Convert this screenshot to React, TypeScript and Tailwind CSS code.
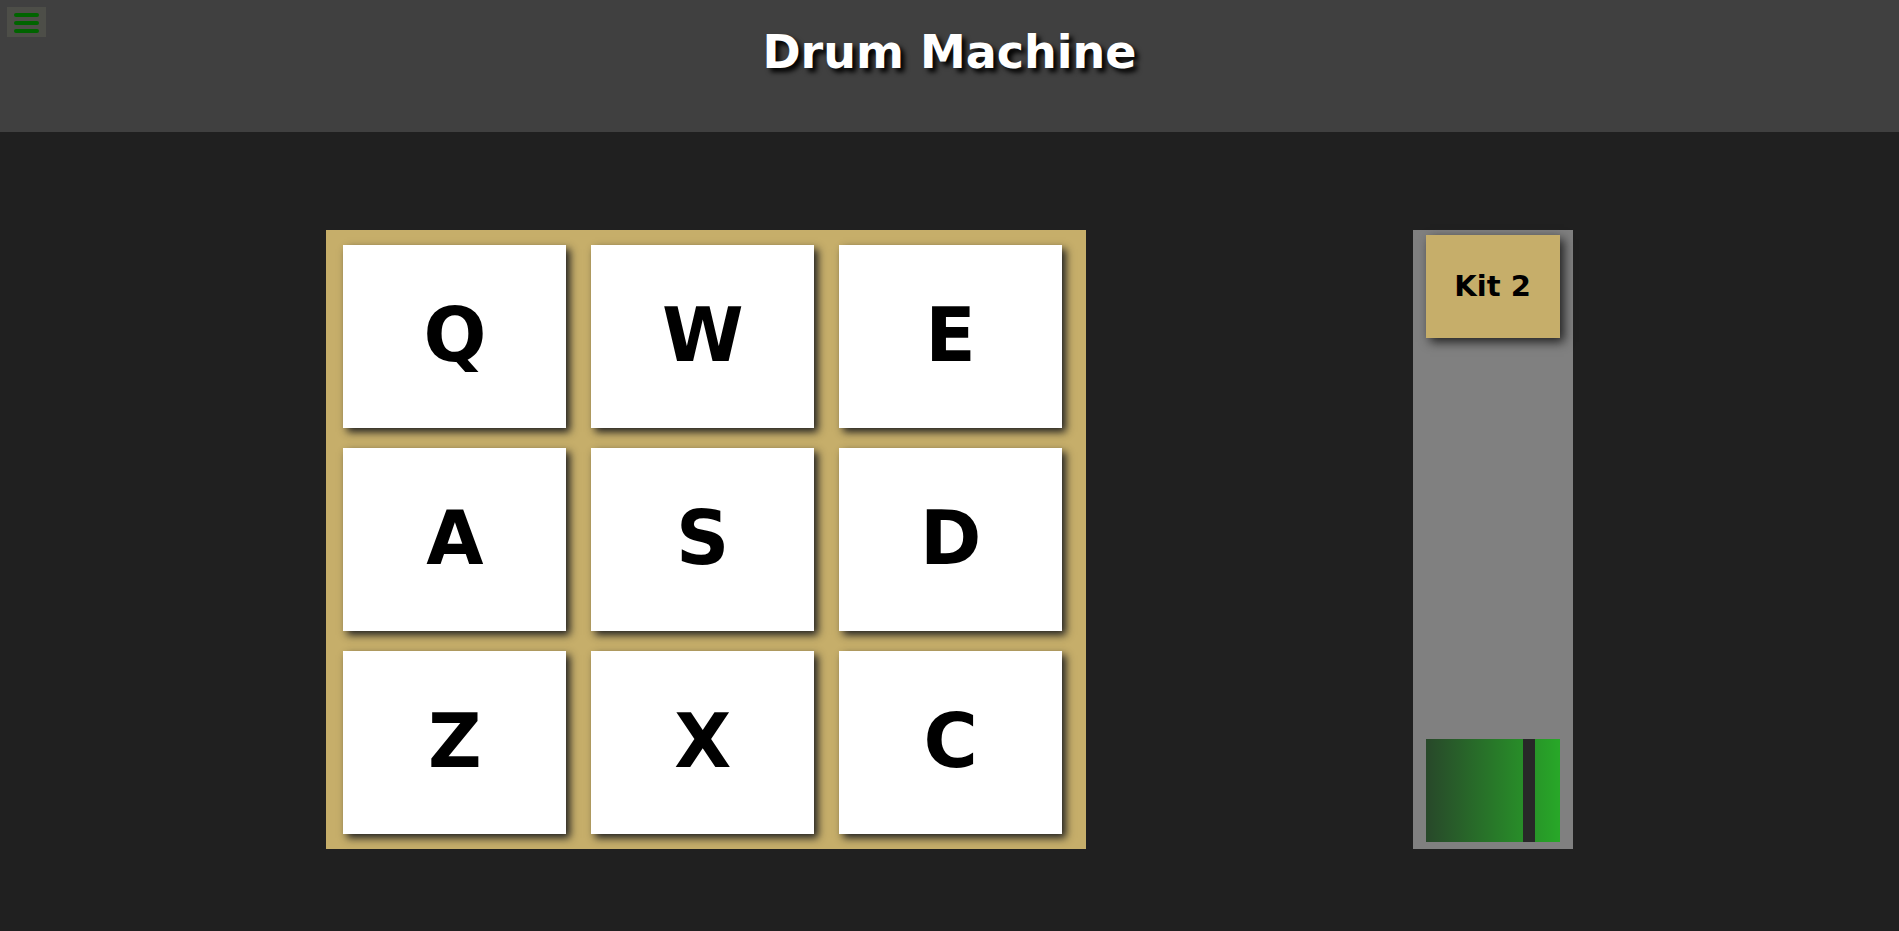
import { useState } from "react";

const pads = ["Q", "W", "E", "A", "S", "D", "Z", "X", "C"];

function MenuButton() {
  return (
    <button
      type="button"
      aria-label="Menu"
      className="absolute left-[7px] top-[7px] flex h-[30px] w-[39px] flex-col items-center justify-center gap-1 bg-[#4d4e48] pt-0.5"
    >
      <span className="h-1 w-[25px] rounded-sm bg-[#006400]" />
      <span className="h-1 w-[25px] rounded-sm bg-[#006400]" />
      <span className="h-1 w-[25px] rounded-sm bg-[#006400]" />
    </button>
  );
}

export default function App() {
  const [kit, setKit] = useState(2);
  const [volume, setVolume] = useState(80);

  return (
    <div className="min-h-screen bg-[#202020] font-['DejaVu_Sans',sans-serif] font-bold text-black">
      <header className="relative flex h-[132px] justify-center bg-[#404040] pt-[25px]">
        <MenuButton />
        <h1 className="text-[46px] leading-[54px] text-white [text-shadow:4px_4px_5px_#000]">
          Drum Machine
        </h1>
      </header>

      <main className="flex items-stretch justify-evenly pt-[98px] pb-[82px]">
        <section
          aria-label="Drum pads"
          className="grid w-2/5 grid-cols-3 gap-x-[25px] gap-y-5 bg-[#c6ae6a] py-[15px] pl-[17px] pr-6"
        >
          {pads.map((pad) => (
            <button
              key={pad}
              type="button"
              className="h-[183px] bg-white pb-1 text-[74px] leading-none shadow-[4px_4px_8px_#202020]"
            >
              {pad}
            </button>
          ))}
        </section>

        <aside className="flex w-40 flex-col justify-between bg-[#808080] px-[13px] pt-[5px] pb-[7px]">
          <button
            type="button"
            onClick={() => setKit(kit === 2 ? 1 : 2)}
            className="h-[103px] bg-[#c6ae6a] text-[29px] leading-none shadow-[4px_4px_10px_#202020]"
          >
            Kit {kit}
          </button>
          <input
            type="range"
            aria-label="Volume"
            min={0}
            max={100}
            value={volume}
            onChange={(e) => setVolume(Number(e.target.value))}
            className="h-[103px] w-full appearance-none bg-linear-to-r/srgb from-[#28482a] to-[#28a828] [&::-webkit-slider-thumb]:h-[103px] [&::-webkit-slider-thumb]:w-3 [&::-webkit-slider-thumb]:appearance-none [&::-webkit-slider-thumb]:bg-[#282828]"
          />
        </aside>
      </main>
    </div>
  );
}
